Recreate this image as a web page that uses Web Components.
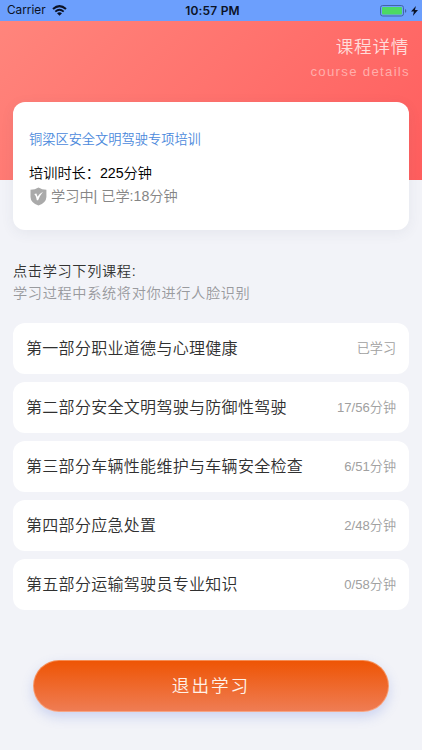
<!DOCTYPE html>
<html lang="zh-CN">
<head>
<meta charset="utf-8">
<title>课程详情</title>
<style>
html,body{margin:0;padding:0}
body{width:422px;height:750px;overflow:hidden;background:#f2f3f8;font-family:"Liberation Sans","Noto Sans CJK SC",sans-serif;font-weight:350}
</style>
</head>
<body>
<course-page></course-page>
<script>
const define = (name, html) => customElements.define(name, class extends HTMLElement {
  constructor() {
    super();
    const t = document.createElement('template');
    t.innerHTML = html;
    this.attachShadow({mode: 'open'}).append(t.content.cloneNode(true));
  }
});

define('status-bar', `
<style>
:host{display:grid;grid-template-columns:1fr auto 1fr;align-items:center;height:21px;padding:0 4px 0 7px;box-sizing:border-box;background:#6c9ffd;color:#0b1226;font:400 12px/19px Inter,sans-serif}
.left,.right{display:flex;align-items:center}
.left{gap:6px;font-size:11.8px}
.right{justify-content:flex-end;gap:4px}
.time{font-weight:600;font-size:12px;letter-spacing:.2px}
svg{display:block}
</style>
<div class="left"><span>Carrier</span>
<svg width="15" height="11" viewBox="0 0 15 11" fill="none" stroke="#0b1226"><path d="M1 4.1Q7.5-1.8 14 4.1" stroke-width="2"/><path d="M3.3 6.6Q7.5 2.8 11.7 6.6" stroke-width="1.8"/><path d="M5 8.2Q7.5 6.2 10 8.2L7.5 10.8Z" fill="#0b1226" stroke="none"/></svg></div>
<span class="time">10:57 PM</span>
<div class="right">
<svg width="27" height="12" viewBox="0 0 27 12"><rect x=".5" y=".5" width="23" height="10.5" rx="2.2" fill="none" stroke="#4265a6"/><rect x="2" y="2" width="20" height="7.5" rx="1" fill="#4cd964"/><path d="M25 4v3.8q1.3-.5 1.3-1.9T25 4Z" fill="#4265a6"/></svg>
<svg width="7" height="10" viewBox="0 0 6 10" preserveAspectRatio="none"><path d="M4.2 0 0 5.6h2.5L1.6 10 6 4.1H3.4Z" fill="#0b1226"/></svg>
</div>`);

define('page-hero', `
<style>
:host{display:flex;flex-direction:column;align-items:flex-end;box-sizing:border-box;height:159px;padding:14px 13px 0 0;background:linear-gradient(135deg,#ff857c 0%,#ff5e5e 100%)}
.title{font-size:17.6px;line-height:24px;letter-spacing:.7px;color:#ffdcda}
.sub{font-size:13.2px;line-height:16px;letter-spacing:1.3px;margin:5px -1px 0 0;color:#ffaeab}
</style>
<div class="title"><slot name="title"></slot></div><div class="sub"><slot></slot></div>`);

define('summary-card', `
<style>
:host{display:block;box-sizing:border-box;height:128px;margin:-78px 13px 0;padding:28px 16px 0;border-radius:12px;background:#fff;box-shadow:0 3px 14px rgba(60,70,100,.07);position:relative}
.name{font-size:13.23px;line-height:20px;color:#4b89dc}
.time{font-size:14.2px;line-height:24px;margin-top:11px;color:#000}
.state{display:flex;align-items:center;gap:4px;font-size:14.2px;line-height:23px;color:#858585}
svg{display:block}
</style>
<div class="name"><slot name="name"></slot></div>
<div class="time"><slot name="time"></slot></div>
<div class="state"><svg width="18" height="19" viewBox="0 0 18 19"><path d="M9.5 .4Q13 2.8 17.4 2.8V10Q17.2 15.7 9.5 18.6Q1.6 15.7 1.5 10V2.8Q6 2.8 9.5 .4Z" fill="#aaa"/><path d="M5.2 7.1 7.4 6.4 8.5 9.8Q10.3 6.7 14 4.8 10.8 8.7 9.1 13.2H7.8Q7 8.5 5.2 7.1Z" fill="#fff"/></svg><span><slot name="state"></slot></span></div>`);

define('section-heading', `
<style>
:host{display:block;margin:30px 13px 0}
.main{font-size:14.2px;line-height:22px;letter-spacing:.65px;color:#333}
.note{font-size:14.2px;line-height:22px;letter-spacing:.65px;color:#999a9e}
</style>
<div class="main"><slot></slot></div><div class="note"><slot name="note"></slot></div>`);

define('course-item', `
<style>
:host{display:flex;align-items:center;justify-content:space-between;box-sizing:border-box;height:51px;padding:0 13px;border-radius:12px;background:#fff}
.name{font-size:16px;letter-spacing:.3px;line-height:24px;color:#303030}
.progress{font-size:13.1px;line-height:20px;color:#a0a0a0}
</style>
<span class="name"><slot></slot></span><span class="progress"><slot name="progress"></slot></span>`);

define('course-list', `
<style>:host{display:flex;flex-direction:column;gap:8px;margin:19px 13px 0}</style><slot></slot>`);

define('exit-button', `
<style>
:host{display:block;margin:50px 33px 0}
button{display:block;box-sizing:border-box;width:100%;height:52px;padding:0;border:1px solid rgba(255,225,205,.4);border-radius:26px;background:linear-gradient(#ee5403,#ef7d55) border-box;box-shadow:0 5px 12px rgba(90,120,220,.25);color:#fff2e9;font:inherit;font-size:17.6px;line-height:50px;letter-spacing:2px;text-align:center}
</style>
<button type="button"><slot></slot></button>`);

define('course-page', `
<style>:host{display:block;height:750px;background:#f2f3f8}</style>
<status-bar></status-bar>
<page-hero><span slot="title">课程详情</span>course details</page-hero>
<summary-card><span slot="name">铜梁区安全文明驾驶专项培训</span><span slot="time">培训时长：225分钟</span><span slot="state">学习中| 已学:18分钟</span></summary-card>
<section-heading>点击学习下列课程:<span slot="note">学习过程中系统将对你进行人脸识别</span></section-heading>
<course-list>
<course-item>第一部分职业道德与心理健康<span slot="progress">已学习</span></course-item>
<course-item>第二部分安全文明驾驶与防御性驾驶<span slot="progress">17/56分钟</span></course-item>
<course-item>第三部分车辆性能维护与车辆安全检查<span slot="progress">6/51分钟</span></course-item>
<course-item>第四部分应急处置<span slot="progress">2/48分钟</span></course-item>
<course-item>第五部分运输驾驶员专业知识<span slot="progress">0/58分钟</span></course-item>
</course-list>
<exit-button>退出学习</exit-button>`);
</script>
</body>
</html>
